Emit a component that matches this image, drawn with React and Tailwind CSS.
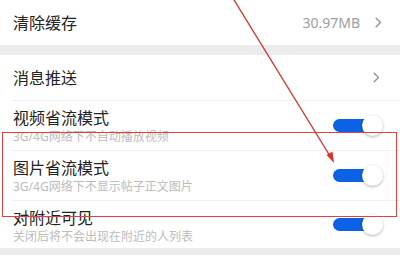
import React from "react";

const font = {
  fontFamily: '"Noto Sans", "Noto Sans CJK SC", sans-serif',
};

const Chevron = () => (
  <svg width="7" height="11" viewBox="0 0 7 11" className="shrink-0">
    <path d="M1.2 1.2 L5.5 5.5 L1.2 9.8" fill="none" stroke="#8f9399" strokeWidth="1.4" strokeLinecap="round" strokeLinejoin="round" />
  </svg>
);

const Toggle = () => (
  <div className="relative w-[50px] h-[21px] shrink-0 flex items-center">
    <div className="w-[42px] h-[13px] rounded-full bg-[#0b62e6]" />
    <div className="absolute right-0 top-0 w-[21px] h-[21px] rounded-full bg-white shadow-[0_1px_3px_rgba(0,0,0,0.3)]" />
  </div>
);

const SwitchRow = ({ title, sub, h }) => (
  <div className={`flex items-center pl-[13px] pr-[17px] ${h}`}>
    <div className="flex-1 flex flex-col self-stretch pt-[8px]">
      <div className="text-[16px] leading-[18px] text-[#222]">{title}</div>
      <div className="text-[12px] leading-[16px] text-[#bcbcbc] mt-[2px]">{sub}</div>
    </div>
    <Toggle />
  </div>
);

export default function App() {
  return (
    <div className="relative w-[400px] h-[255px] bg-white overflow-hidden" style={font}>
      {/* clear cache */}
      <div className="h-[45px] flex items-center pl-[13px] pr-[18px]">
        <span className="flex-1 text-[16px] text-[#222]">清除缓存</span>
        <span className="text-[14px] text-[#9a9ea4] mr-[15px]">30.97MB</span>
        <Chevron />
      </div>
      <div className="h-[10px] bg-[#ececec]" />

      {/* push */}
      <div className="h-[45px] flex items-center pl-[13px] pr-[20px]">
        <span className="flex-1 text-[16px] text-[#222]">消息推送</span>
        <Chevron />
      </div>
      <div className="ml-[12px] h-px bg-[#f0f0f0]" />

      <SwitchRow h="h-[49px]" title="视频省流模式" sub="3G/4G网络下不自动播放视频" />
      <div className="ml-[12px] h-px bg-[#f0f0f0]" />
      <SwitchRow h="h-[49px]" title="图片省流模式" sub="3G/4G网络下不显示帖子正文图片" />
      <div className="ml-[12px] h-px bg-[#f0f0f0]" />
      <SwitchRow h="h-[47px]" title="对附近可见" sub="关闭后将不会出现在附近的人列表" />
      <div className="h-[10px] bg-[#ececec]" />

      {/* annotation */}
      <div className="absolute left-[2px] top-[132px] w-[395px] h-[85px] border-[1.5px] border-[#e2403c] pointer-events-none" />
      <svg className="absolute inset-0 pointer-events-none" width="400" height="255">
        <line x1="234" y1="0" x2="330" y2="156" stroke="#d8352f" strokeWidth="1.4" />
        <polygon points="334,163 326.5,155 332.5,151.5" fill="#d8352f" />
      </svg>
    </div>
  );
}
